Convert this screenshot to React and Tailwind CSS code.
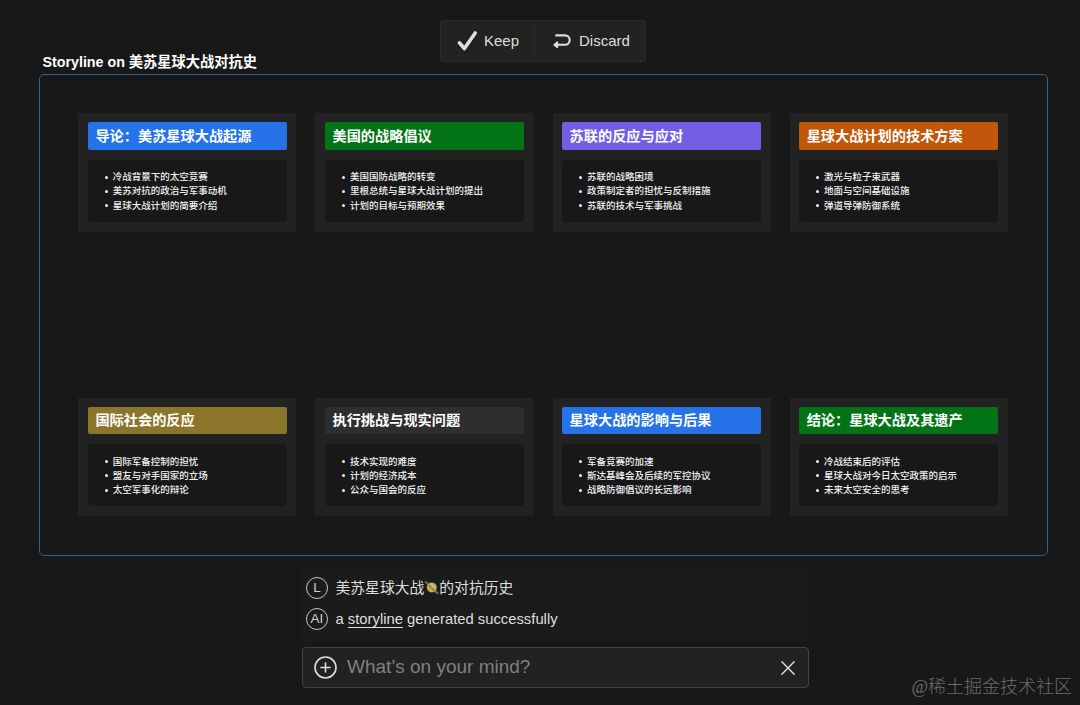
import { useState } from 'react';
import clsx from 'clsx';

const CARDS = [
  {
    title: '导论：美苏星球大战起源',
    color: 'bg-[#2672e8]',
    items: ['冷战背景下的太空竞赛', '美苏对抗的政治与军事动机', '星球大战计划的简要介绍'],
  },
  {
    title: '美国的战略倡议',
    color: 'bg-[#037416]',
    items: ['美国国防战略的转变', '里根总统与星球大战计划的提出', '计划的目标与预期效果'],
  },
  {
    title: '苏联的反应与应对',
    color: 'bg-[#735fe3]',
    items: ['苏联的战略困境', '政策制定者的担忧与反制措施', '苏联的技术与军事挑战'],
  },
  {
    title: '星球大战计划的技术方案',
    color: 'bg-[#c0570b]',
    items: ['激光与粒子束武器', '地面与空间基础设施', '弹道导弹防御系统'],
  },
  {
    title: '国际社会的反应',
    color: 'bg-[#8b752a]',
    items: ['国际军备控制的担忧', '盟友与对手国家的立场', '太空军事化的辩论'],
  },
  {
    title: '执行挑战与现实问题',
    color: 'bg-[#2e2e2e]',
    items: ['技术实现的难度', '计划的经济成本', '公众与国会的反应'],
  },
  {
    title: '星球大战的影响与后果',
    color: 'bg-[#2672e8]',
    items: ['军备竞赛的加速', '斯达基峰会及后续的军控协议', '战略防御倡议的长远影响'],
  },
  {
    title: '结论：星球大战及其遗产',
    color: 'bg-[#037416]',
    items: ['冷战结束后的评估', '星球大战对今日太空政策的启示', '未来太空安全的思考'],
  },
];

const CheckIcon = () => (
  <svg width="22" height="22" viewBox="0 0 22 22" fill="none">
    <path d="M3.4 12.8 L8.4 18.6 L19.2 3" stroke="#dedede" strokeWidth="3.6" strokeLinecap="round" strokeLinejoin="round" />
  </svg>
);

const ReturnIcon = () => (
  <svg width="18" height="16" viewBox="0 0 18 16" fill="none">
    <path d="M3.2 2.4 H12 A4.4 4.4 0 0 1 12 11.8 H4" stroke="#dedede" strokeWidth="2.1" strokeLinecap="round" />
    <path d="M1.2 11.8 L4.4 9.2 V14.4 Z" fill="#dedede" stroke="#dedede" strokeWidth="1.6" strokeLinejoin="round" />
  </svg>
);

const PlanetIcon = () => (
  <svg className="h-[15px] w-[15px] overflow-visible" viewBox="0 0 15 15" fill="none">
    <path d="M1.8 1 L13.4 12.2" stroke="#75663c" strokeWidth="2.4" strokeLinecap="round" />
    <circle cx="7.8" cy="6.5" r="5" fill="#b8aa62" />
    <path d="M4.6 3.8 L10.6 10" stroke="#8a7a42" strokeWidth="1.2" />
    <path d="M7 2.8 L11.6 7.2" stroke="#d6cc8c" strokeWidth="1.1" />
  </svg>
);

const Avatar = ({ label }) => (
  <span className="flex h-[22px] w-[22px] shrink-0 items-center justify-center rounded-full border-[1.3px] border-[#c4c4c4] text-[13.5px] leading-none text-[#d0d0d0]">
    {label}
  </span>
);

const Card = ({ title, color, items }) => (
  <div className="h-[118.5px] w-[218px] bg-[#222222] p-[9.4px]">
    <h2 className={clsx('flex h-[27.5px] items-center rounded-[2px] pt-px pl-[7.6px] text-[14.2px] font-bold whitespace-nowrap text-white', color)}>
      {title}
    </h2>
    <ul className="mt-[10px] h-[62px] rounded-[4px] bg-[#181818] pt-[9.5px] pl-[17px]">
      {items.map((item) => (
        <li key={item} className="flex h-[14.3px] items-center gap-[5px] text-[9.5px] font-medium whitespace-nowrap text-[#f2f2f2]">
          <span className="mt-px h-[3px] w-[3px] rounded-full bg-[#f2f2f2]" />
          <span className="pb-[1px] font-['Noto_Sans_CJK_SC',sans-serif] leading-[14px]">{item}</span>
        </li>
      ))}
    </ul>
  </div>
);

const App = () => {
  const [message, setMessage] = useState('');

  return (
    <div className="relative flex h-[705px] w-[1080px] flex-col overflow-hidden bg-[#181818] font-['Liberation_Sans','Noto_Sans_CJK_SC',sans-serif]">
      <header className="flex h-[74px] shrink-0 pl-[42.5px]">
        <h1 className="mb-[2px] w-[397.5px] self-end text-[14.25px] leading-5 font-bold text-white">
          Storyline on 美苏星球大战对抗史
        </h1>
        <div className="mt-5 flex h-[42px] w-[206px] items-center rounded-[3px] border border-[#2b2b2b] bg-[#222222] text-[15px] text-[#dedede]">
          <button className="flex h-[28px] w-[94px] items-center gap-[6px] border-r border-[#2b2b2b] pl-[15px]">
            <CheckIcon />
            Keep
          </button>
          <button className="flex items-center gap-[8px] pl-[18px]">
            <ReturnIcon />
            Discard
          </button>
        </div>
      </header>

      <main className="ml-[39.4px] grid h-[482px] w-[1008.4px] shrink-0 grid-cols-[repeat(4,218px)] grid-rows-[repeat(2,118.5px)] gap-x-[19.1px] gap-y-[166px] rounded-[5px] border border-[#2f5f8c] pt-[38px] pl-[38px]">
        {CARDS.map((card) => (
          <Card key={card.title} {...card} />
        ))}
      </main>

      <section className="mt-[13px] ml-[302px] w-[507px]">
        <div className="flex h-[73px] flex-col gap-[9px] bg-[#1b1b1b] pt-2 pl-[4px] text-[14.8px] text-[#dedede]">
          <div className="flex h-[22px] items-center gap-[7.5px]">
            <Avatar label="L" />
            <p className="flex items-center">
              美苏星球大战
              <PlanetIcon />
              的对抗历史
            </p>
          </div>
          <div className="flex h-[22px] items-center gap-[7.5px]">
            <Avatar label="AI" />
            <p>
              a <a className="border-b border-[#dedede]">storyline</a> generated successfully
            </p>
          </div>
        </div>

        <div className="mt-[5px] flex h-[41px] items-center rounded-[4px] border border-[#424242] bg-[#222222] pl-[11px] pr-[13px]">
          <svg width="23" height="23" viewBox="0 0 23 23" fill="none" stroke="#dedede" strokeWidth="1.6" strokeLinecap="round">
            <circle cx="11.5" cy="11.5" r="10.5" />
            <path d="M11.5 7 V16 M7 11.5 H16" />
          </svg>
          <input
            className="ml-[10px] min-w-0 flex-1 text-[19px] text-[#dedede] outline-none placeholder:text-[#808080]"
            placeholder="What’s on your mind?"
            value={message}
            onChange={(e) => setMessage(e.target.value)}
          />
          <button onClick={() => setMessage('')}>
            <svg width="14" height="14" viewBox="0 0 14 14" fill="none" stroke="#dedede" strokeWidth="1.4" strokeLinecap="round">
              <path d="M0.8 0.8 L13.2 13.2 M13.2 0.8 L0.8 13.2" />
            </svg>
          </button>
        </div>
      </section>

      <span className="absolute right-[8px] bottom-[5px] font-['Liberation_Serif','Noto_Sans_CJK_SC',serif] text-[18px] leading-[26px] font-light text-[#6c6c6c]">
        @稀土掘金技术社区
      </span>
    </div>
  );
};

export default App;
